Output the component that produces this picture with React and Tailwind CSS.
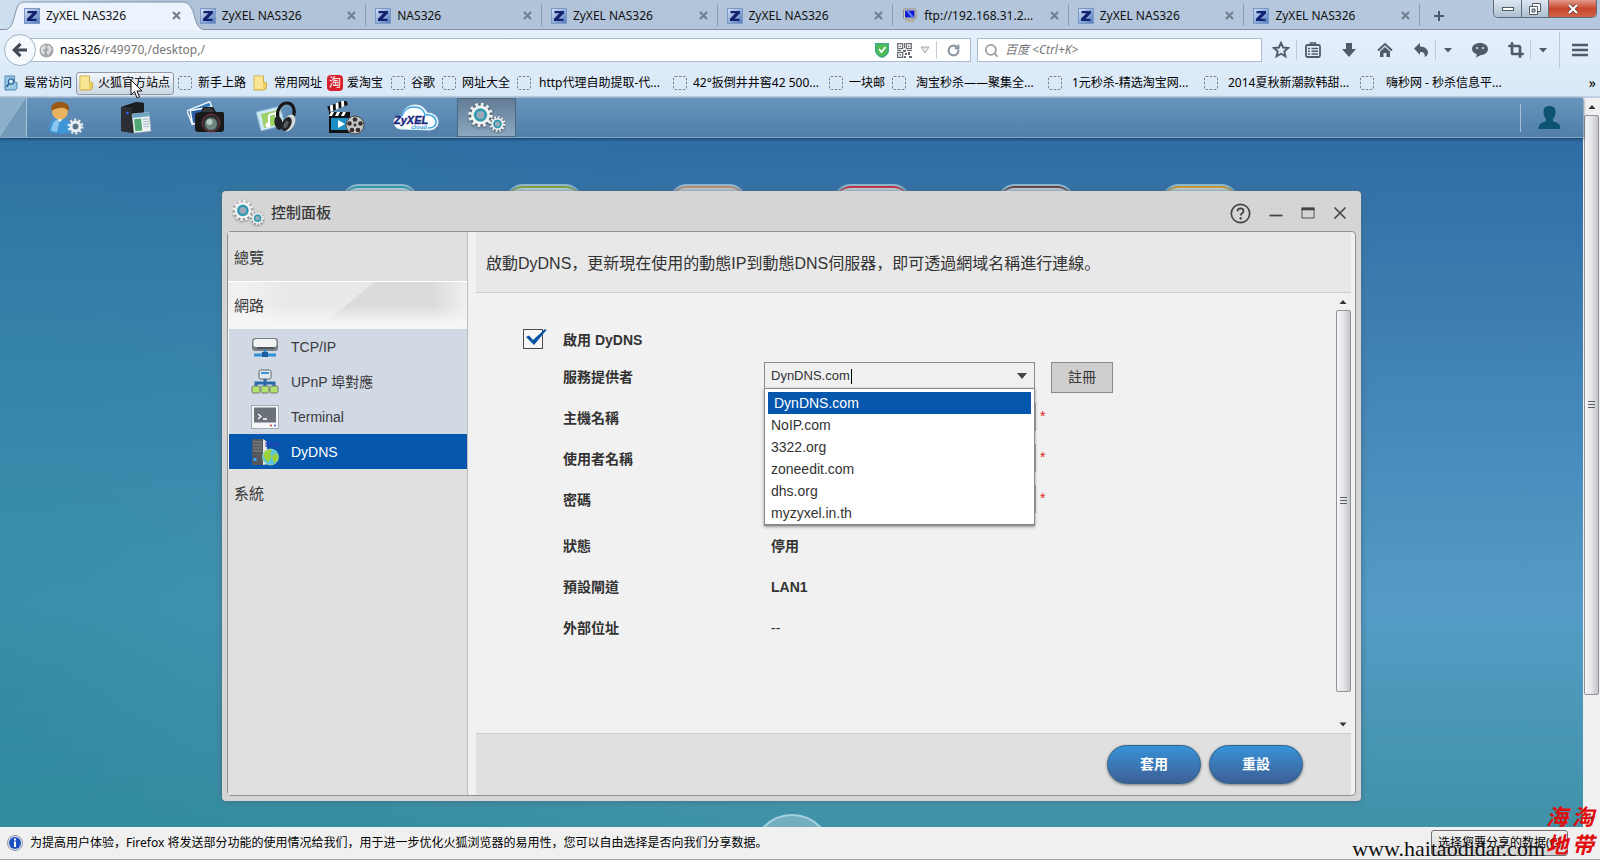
import { useState } from "react"
import { Crop, Search, RotateCw } from "lucide-react"

const UI_FONT = "font-['Noto_Sans','Noto_Sans_CJK_SC',sans-serif]"
const NAS_FONT = "font-['Liberation_Sans','Noto_Sans_CJK_TC',sans-serif]"

const tabs = [
  { title: "ZyXEL NAS326", active: true },
  { title: "ZyXEL NAS326" },
  { title: "NAS326" },
  { title: "ZyXEL NAS326" },
  { title: "ZyXEL NAS326" },
  { title: "ftp://192.168.31.2...", ftp: true },
  { title: "ZyXEL NAS326" },
  { title: "ZyXEL NAS326" },
]

const bookmarks = [
  { title: "最常访问", icon: "recent", box: "w-[72px] gap-1.5" },
  { title: "火狐官方站点", icon: "folder", box: "w-[98px] gap-1", hover: true },
  { title: "新手上路", icon: "blank", box: "w-[75px] gap-1.5" },
  { title: "常用网址", icon: "folder", box: "w-[74px] gap-1.5" },
  { title: "爱淘宝", icon: "taobao", box: "w-16 gap-1" },
  { title: "谷歌", icon: "blank", box: "w-[51px] gap-1.5" },
  { title: "网址大全", icon: "blank", box: "w-[75px] gap-1.5" },
  { title: "http代理自助提取-代...", icon: "blank", box: "w-[156px] gap-2" },
  { title: "42°扳倒井井窖42 500...", icon: "blank", box: "w-[156px] gap-1.5" },
  { title: "一块邮", icon: "blank", box: "w-[63px] gap-1.5" },
  { title: "淘宝秒杀——聚集全...", icon: "blank", box: "w-[156px] gap-2.5" },
  { title: "1元秒杀-精选淘宝网...", icon: "blank", box: "w-[156px] gap-2.5" },
  { title: "2014夏秋新潮款韩甜...", icon: "blank", box: "w-[156px] gap-2.5" },
  { title: "嗨秒网 - 秒杀信息平...", icon: "blank", box: "w-[156px] gap-3" },
]

const networkItems = [
  { title: "TCP/IP", icon: <TcpIcon /> },
  { title: "UPnP 埠對應", icon: <UpnpIcon /> },
  { title: "Terminal", icon: <TerminalIcon /> },
  { title: "DyDNS", icon: <DydnsIcon />, active: true },
]

const providers = ["DynDNS.com", "NoIP.com", "3322.org", "zoneedit.com", "dhs.org", "myzyxel.in.th"]

const fields = [
  { id: "host", label: "主機名稱", type: "text" },
  { id: "user", label: "使用者名稱", type: "text" },
  { id: "pass", label: "密碼", type: "password" },
]

const statusRows = [
  { label: "狀態", value: "停用" },
  { label: "預設閘道", value: "LAN1" },
  { label: "外部位址", value: "--", weight: "font-normal" },
]

const shortcuts = [
  "border-t-[#2f9fb0]",
  "border-t-[#86a83c]",
  "border-t-[#c98f6c]",
  "border-t-[#c8323c]",
  "border-t-[#6c3f3c]",
  "border-t-[#d99a2e]",
]

function ZIcon() {
  return (
    <svg width="16" height="16" viewBox="0 0 16 16" className="shrink-0">
      <defs>
        <linearGradient id="zbg" x1="0" y1="0" x2="1" y2="1">
          <stop offset="0" stopColor="#d4e2f5" />
          <stop offset="1" stopColor="#4f78bd" />
        </linearGradient>
      </defs>
      <rect x="0.5" y="0.5" width="15" height="15" fill="url(#zbg)" stroke="#7b98c6" />
      <path d="M3.500 3h9.500v2.300l-5.500 5.400h5v2.300h-9.500v-2.300l5.500-5.400h-5z" fill="#12246f" />
    </svg>
  )
}

function FtpIcon() {
  return (
    <svg width="16" height="16" viewBox="0 0 16 16" className="shrink-0">
      <rect x="1.500" y="1" width="12.500" height="10" rx="1" fill="#d5d2c5" stroke="#8f8d84" />
      <rect x="3" y="2.500" width="9.500" height="7" fill="#0a1bd0" />
      <path d="M4 3h3l5 6H9z" fill="#5d78ff" />
      <path d="M5.500 11.500h5l2.500 3h-10z" fill="#b5b2a6" />
    </svg>
  )
}

function CloseIcon() {
  return (
    <svg width="9" height="9" viewBox="0 0 9 9">
      <path d="M1 1l7 7M8 1l-7 7" stroke="#737f8c" strokeWidth="2.200" />
    </svg>
  )
}

function BookmarkIcon({ type }) {
  if (type === "folder") {
    return (
      <svg width="15" height="16" viewBox="0 0 15 16" className="shrink-0">
        <path d="M1 1h9.500V7l3 .8V13.500L11 15H1z" fill="#efcf63" stroke="#cfae4d" />
        <path d="M1.500 1.500h8.500v12.500H1.500z" fill="#f8e694" />
      </svg>
    )
  }
  if (type === "recent") {
    return (
      <svg width="14" height="16" viewBox="0 0 14 16" className="shrink-0">
        <path d="M1 1h9.500V7l2.500.8V13.500L11 15H1z" fill="#9cc9e6" stroke="#4a87b4" />
        <circle cx="7" cy="6.500" r="2.600" fill="#d8edfa" stroke="#2a6595" strokeWidth="1.300" />
        <path d="M5.200 8.500l-3 3.500" stroke="#2a6595" strokeWidth="1.700" />
      </svg>
    )
  }
  if (type === "taobao") {
    return (
      <span className="flex h-4 w-4 shrink-0 items-center justify-center rounded-sm bg-[#d8202c] text-[12px] leading-none text-white">
        淘
      </span>
    )
  }
  return (
    <svg width="14" height="14" viewBox="0 0 14 14" className="shrink-0">
      <rect x="0.500" y="0.500" width="13" height="13" rx="1.500" fill="none" stroke="#7b848e" strokeDasharray="2.500 1.500" />
    </svg>
  )
}

function Gear({ cx, cy, r }) {
  const step = (r * 2 * Math.PI) / 24
  return (
    <g>
      <circle cx={cx} cy={cy} r={r} fill="none" stroke="#eceeee" strokeWidth={r * 0.34} strokeDasharray={`${step} ${step}`} />
      <circle cx={cx} cy={cy} r={r * 0.9} fill="#f3f4f4" />
      <circle cx={cx} cy={cy} r={r * 0.68} fill="#cfd5d8" />
      <circle cx={cx} cy={cy} r={r * 0.5} fill="#9aa9b5" stroke="#2a9ab3" strokeWidth={r * 0.24} />
    </g>
  )
}

function GearsIcon({ className }) {
  return (
    <svg viewBox="0 0 38 32" className={className}>
      <g style={{ filter: "drop-shadow(0 1px 1px rgba(0,0,0,.5))" }}>
        <Gear cx={12.500} cy={13} r={10.500} />
        <Gear cx={29.500} cy={22} r={6.800} />
      </g>
    </svg>
  )
}

function UserGearIcon() {
  return (
    <svg width="36" height="34" viewBox="0 0 36 34">
      <path d="M1 31c0-10 4-15 11-15s11 5 11 15c-6 2-16 2-22 0z" fill="#3f96d6" />
      <path d="M3 30c1-8 4-12 9-12l-3 13z" fill="#8ac6f0" />
      <path d="M8 16l4 5 4-5z" fill="#fff" />
      <circle cx="12" cy="10.500" r="8" fill="#e9b25f" />
      <path d="M3.500 10C2 3 7 1 12 1s10.500 2 8.700 9C18 8 17 6 12 7S6 8 3.500 10z" fill="#9a5914" />
      <circle cx="27.500" cy="25.500" r="6.500" fill="none" stroke="#e6e9ec" strokeWidth="3" strokeDasharray="2 2.080" />
      <circle cx="27.500" cy="25.500" r="4.500" fill="none" stroke="#eceff2" strokeWidth="3" />
      <circle cx="27.500" cy="25.500" r="2.500" fill="#5b7284" />
    </svg>
  )
}

function StorageIcon() {
  return (
    <svg width="34" height="34" viewBox="0 0 34 34">
      <path d="M2 6l15-5 8 1v28l-9 2L2 30z" fill="#15181b" />
      <path d="M2 6l11 0v26L2 30z" fill="#2b2f34" />
      <path d="M17 1l8 1v28l-9 2-3-1V6z" fill="#1d2023" />
      <circle cx="8.500" cy="12" r="1.300" fill="#3b63ff" />
      <g transform="rotate(-6 23 22)">
        <rect x="14" y="12" width="17" height="19" fill="#eef2f2" stroke="#b9c2c6" strokeWidth="0.500" />
        <rect x="14" y="12" width="17" height="4" fill="#6aa5c4" />
        <rect x="15.500" y="17.500" width="7" height="12" fill="#4fa873" />
        <path d="M24 18.500h6M24 21h6M24 23.500h6M24 26h6" stroke="#9db9cc" />
      </g>
    </svg>
  )
}

function PhotoIcon() {
  return (
    <svg width="38" height="34" viewBox="0 0 38 34">
      <g transform="rotate(-22 14 12)">
        <rect x="1" y="4" width="26" height="16" fill="#e8f2fa" />
        <rect x="2.500" y="5.500" width="23" height="13" fill="#3376bd" />
      </g>
      <g transform="rotate(-10 14 12)">
        <rect x="3" y="7" width="22" height="15" fill="#fff" />
        <rect x="4.500" y="8.500" width="19" height="12" fill="#2a5fa6" />
      </g>
      <path d="M9 12l5-1 2-5h10l3 5h6c2 0 2 1 2 3v14c0 2-1 3-3 3H11c-2 0-3-1-3-3V14z" fill="#17191b" />
      <path d="M17 7h8l2 4H15z" fill="#34383c" />
      <circle cx="24" cy="22" r="9" fill="#2c2e31" stroke="#843237" />
      <circle cx="24" cy="23" r="6.500" fill="#6f857d" stroke="#3a3d40" />
      <circle cx="22.500" cy="21" r="3" fill="#b4cdc2" />
    </svg>
  )
}

function MusicIcon() {
  return (
    <svg width="42" height="34" viewBox="0 0 42 34">
      <path d="M1 11l24-6 5 19-24 6z" fill="#cfe8f5" stroke="#7eb0cf" />
      <path d="M6 13l17-4 3 14-17 4z" fill="#9ed16a" />
      <path d="M14 14l7-2v9M14 14v10" stroke="#fff" strokeWidth="2" fill="none" />
      <circle cx="13" cy="24" r="2.500" fill="#fff" />
      <path d="M23 18C21 9 26 2 32 2s9 7 6 15" fill="none" stroke="#141618" strokeWidth="3.200" />
      <path d="M25 18C23 11 27 5 31 4.500" fill="none" stroke="#9aa1a6" />
      <ellipse cx="23.500" cy="22" rx="4" ry="7" transform="rotate(-12 23.500 22)" fill="#202325" />
      <ellipse cx="34" cy="22" rx="5.500" ry="9" transform="rotate(28 34 22)" fill="#d3d8da" />
      <ellipse cx="31.500" cy="23" rx="4.500" ry="7.500" transform="rotate(28 31.500 23)" fill="#202325" />
      <ellipse cx="31" cy="23.500" rx="2" ry="4" transform="rotate(28 31 23.500)" fill="#555c60" />
    </svg>
  )
}

function VideoIcon() {
  return (
    <svg width="38" height="34" viewBox="0 0 38 34">
      <g transform="rotate(-22 3 10)">
        <rect x="2" y="5" width="20" height="6" fill="#111" />
        <path d="M5 5h3l-2 6H3zM11 5h3l-2 6H9zM17 5h3l-2 6h-3z" fill="#fff" />
      </g>
      <rect x="2" y="11" width="21" height="21" fill="#101316" />
      <path d="M4 11h3l-2 4H2zM10 11h3l-2 4H8zM16 11h3l-2 4h-3z" fill="#fff" />
      <rect x="4" y="17" width="17" height="12" fill="#1d8fc4" />
      <path d="M11 19l7 4-7 4z" fill="#fff" />
      <circle cx="28" cy="24" r="9" fill="#c2c6c6" stroke="#4a4c4c" />
      {[[28, 18.500], [33.500, 22.500], [31, 29], [25, 29], [22.500, 22.500]].map(([x, y]) => (
        <circle key={x} cx={x} cy={y} r="2.300" fill="#3d2f2d" />
      ))}
      <circle cx="28" cy="24" r="1.500" fill="#333" />
    </svg>
  )
}

function CloudIcon() {
  return (
    <svg width="46" height="28" viewBox="0 0 46 28">
      <path d="M8 25c-5 0-7-4-7-7 0-4 4-6 8-6 1-7 7-11 13-11 6 0 10 3 12 8 6 0 11 3 11 9 0 5-4 8-9 8z" fill="#fff" stroke="#dceefb" />
      <path d="M9 12c2-6 6-9 12-9s10 3 11 8c6-1 11 2 11 7 0 4-3 6-8 6" fill="none" stroke="#3fa3de" strokeWidth="1.500" />
      <text x="1" y="20" fontFamily="Liberation Sans, sans-serif" fontSize="11" fontWeight="700" fontStyle="italic" fill="#1b2a80" stroke="#1b2a80" strokeWidth="0.400">ZyXEL</text>
      <text x="18" y="25" fontFamily="Liberation Sans, sans-serif" fontSize="6" fontWeight="700" fill="#2f9bdd">cloud</text>
    </svg>
  )
}

function TcpIcon() {
  return (
    <svg width="28" height="24" viewBox="0 0 28 24">
      <rect x="1" y="3" width="26" height="13" rx="3.500" fill="#787e83" />
      <rect x="2.500" y="4" width="23" height="8" rx="2.500" fill="#f2f4f4" />
      <rect x="6" y="12" width="17" height="2" fill="#4d5357" />
      <path d="M14 15v5M3 20h22" stroke="#2f8fd8" strokeWidth="3" />
      <rect x="11" y="17" width="6" height="5" fill="#1f5f9c" />
    </svg>
  )
}

function UpnpIcon() {
  return (
    <svg width="28" height="26" viewBox="0 0 28 26">
      <rect x="8" y="1" width="12" height="9" rx="1.500" fill="#e3e8ea" stroke="#5e666b" />
      <rect x="10" y="3" width="8" height="2" fill="#3a92da" />
      <path d="M14 10v7M5 17v-3h18v3" stroke="#2b6ba8" strokeWidth="3" fill="none" />
      <rect x="1" y="17" width="8" height="7" rx="1.500" fill="#b3e26c" stroke="#6e7777" />
      <rect x="10" y="17" width="8" height="7" rx="1.500" fill="#b3e26c" stroke="#6e7777" />
      <rect x="19" y="17" width="8" height="7" rx="1.500" fill="#b3e26c" stroke="#6e7777" />
    </svg>
  )
}

function TerminalIcon() {
  return (
    <svg width="28" height="24" viewBox="0 0 28 24">
      <rect x="0.500" y="0.500" width="27" height="23" fill="#f4f6f8" stroke="#a3abb5" />
      <rect x="3" y="2.500" width="22" height="15" fill="#6a7179" />
      <path d="M7 9l3 2.500L7 14M12 14h4" stroke="#fff" strokeWidth="1.300" fill="none" />
      <circle cx="20" cy="20.500" r="1" fill="#cf3434" />
      <circle cx="24" cy="20.500" r="1" fill="#2f5fcc" />
    </svg>
  )
}

function DydnsIcon() {
  return (
    <svg width="28" height="28" viewBox="0 0 28 28">
      <path d="M1 1h11l4 3v22l-4 1H1z" fill="#8d9194" />
      <path d="M12 1l4 3v22l-4 1z" fill="#e4e6e7" />
      <rect x="1" y="1" width="11" height="26" fill="#55595c" />
      <path d="M2 4h9M2 7h9M2 10h9M2 13h9" stroke="#85898c" />
      <rect x="2.500" y="20" width="3" height="3" fill="#38a8ff" />
      <text x="14" y="9" fontFamily="Liberation Sans, sans-serif" fontSize="7" fontWeight="700" fill="#2c3fb2">DNS</text>
      <circle cx="19.500" cy="19" r="8" fill="#58c3ea" />
      <path d="M13 15c2-4 6-4 8-3l-2 4 2 2-3 6c-3 0-6-5-5-9zM23 15l4 2c1 4-1 7-4 8l-2-5z" fill="#9bd038" />
      <circle cx="19.500" cy="19" r="8" fill="none" stroke="#bfe79a" strokeWidth="0.700" />
    </svg>
  )
}

function Divider() {
  return <span className="h-9 w-px shrink-0 bg-[#bcc8d4]" />
}

function TabStrip() {
  return (
    <div className="relative flex h-[30px] items-stretch border-b border-[#8193a8] bg-linear-to-r from-[#cfe0f1] via-[#b0c2d7] via-10% to-[#b5c8de] pl-[15px]">
      <div className="flex min-w-0 flex-1">
        {tabs.map((tab, index) => (
          <div key={index} className="relative flex min-w-0 flex-1 items-center pt-0.5 pr-2.5 pl-[9px]">
            {tab.active && (
              <svg viewBox="0 0 201 30" preserveAspectRatio="none" className="absolute top-0 -left-[11px] h-[30px] w-[201px]">
                <path
                  d="M0 30C9 29 9 20 12 11C14 3 17 2 22 2H177C184 2 186 5 189 11C192 22 193 29 201 30"
                  fill="#ecf3fc"
                  stroke="#8193a8"
                />
              </svg>
            )}
            <button className="relative flex min-w-0 flex-1 items-center gap-1.5 text-[12px] text-[#111]">
              {tab.ftp ? <FtpIcon /> : <ZIcon />}
              <span className="truncate">{tab.title}</span>
            </button>
            <button aria-label="关闭标签页" className="relative shrink-0">
              <CloseIcon />
            </button>
            {index > 0 && <span className="absolute top-1 right-0 h-[22px] w-px bg-[#8b9cb0]" />}
          </div>
        ))}
      </div>
      <div className="flex w-[180px] shrink-0 items-center pt-0.5 pl-[13px]">
        <button aria-label="新标签页">
          <svg width="12" height="12" viewBox="0 0 12 12">
            <path d="M6 1v10M1 6h10" stroke="#4c5865" strokeWidth="2" />
          </svg>
        </button>
      </div>
      <div className="absolute top-0 right-[3px] flex h-[18px] overflow-hidden rounded-b-[5px] border border-t-0 border-[#5f6b78]">
        <button aria-label="最小化" className="flex w-7 items-center justify-center border-r border-[#5f6b78] bg-linear-to-b from-[#dde7f1] to-[#aebfd1]">
          <span className="h-1 w-3 border border-[#515962] bg-white" />
        </button>
        <button aria-label="还原" className="flex w-[27px] items-center justify-center border-r border-[#5f6b78] bg-linear-to-b from-[#dde7f1] to-[#aebfd1]">
          <svg width="12" height="12" viewBox="0 0 12 12">
            <path d="M3.500.5h8v8h-8z" fill="#fff" stroke="#515962" />
            <path d="M.5 3.500h8v8h-8z" fill="#fff" stroke="#515962" />
            <path d="M3 6h3v3H3z" fill="#aebfd1" stroke="#515962" />
          </svg>
        </button>
        <button aria-label="关闭" className="flex w-[47px] items-center justify-center bg-linear-to-b from-[#e29a88] via-[#c9452c] to-[#d0614a]">
          <svg width="12" height="10" viewBox="0 0 12 10">
            <path d="M2 1l8 8M10 1L2 9" stroke="#5b2f2a" strokeWidth="3.600" />
            <path d="M2 1l8 8M10 1L2 9" stroke="#fff" strokeWidth="2.400" />
          </svg>
        </button>
      </div>
    </div>
  )
}

function NavBar() {
  return (
    <div className="flex h-10 items-center pl-1">
      <button aria-label="后退" className="relative z-10 flex h-8 w-8 shrink-0 items-center justify-center rounded-full border border-[#a0b1c4] bg-[#f6fafe]">
        <svg width="16" height="16" viewBox="0 0 16 16">
          <path d="M15 8H3M8.500 1.800L2.300 8l6.200 6.200" stroke="#404b57" strokeWidth="3.200" fill="none" />
        </svg>
      </button>
      <div className="-ml-1.5 flex h-6 min-w-0 flex-1 items-center border border-[#a9bbcd] bg-white pr-2.5 pl-2">
        <svg width="15" height="15" viewBox="0 0 15 15" className="shrink-0">
          <circle cx="7.500" cy="7.500" r="7" fill="#a3a7ab" />
          <path d="M2 5l3-3 2 1-1 3-2 1 2 2-1 3-3-3zM9 2l3 2 1 3-2 2-1 3-2-1V8l2-1-2-2z" fill="#dcdee0" />
        </svg>
        <p className="ml-1.5 flex-1 text-[12px] text-black">
          nas326<span className="text-[#777]">/r49970,/desktop,/</span>
        </p>
        <svg width="14" height="16" viewBox="0 0 14 16">
          <path d="M0 1h14v8c0 3-4 6-7 7-3-1-7-4-7-7z" fill="#3fa98c" />
          <path d="M1.500 2.500h11V9c0 2-3 4.500-5.500 5.500C4.500 13.500 1.500 11 1.500 9z" fill="#4ebd52" />
          <path d="M4 7l2.500 3L10.500 5" stroke="#fff" strokeWidth="1.800" fill="none" />
        </svg>
        <svg width="15" height="15" viewBox="0 0 15 15" className="ml-2">
          <path
            d="M.7.700h5v5h-5zM9.300.7h5v5h-5zM.7 9.300h5v5h-5z"
            fill="none"
            stroke="#6c7076"
            strokeWidth="1.300"
          />
          <path d="M2.500 2.500h1.500v1.500H2.500zM11 2.500h1.500v1.500H11zM2.500 11h1.500v1.500H2.500zM7 0h1v5H7zM0 7h4v1H0zM6 7h3v2H6zM10 7h5v1h-5zM8 10h2v2H8zM11 9h2v3h-2zM7 13h2v2H7zM12 13h3v2h-3z" fill="#6c7076" />
        </svg>
        <svg width="10" height="8" viewBox="0 0 10 8" className="ml-2">
          <path d="M1 1h8L5 7z" fill="#e3e5e8" stroke="#a5abb2" />
        </svg>
        <span className="mr-2.5 ml-1.5 h-[18px] w-px bg-[#c5ced8]" />
        <button aria-label="刷新">
          <RotateCw size={13} strokeWidth={4} color="#8c98a6" />
        </button>
      </div>
      <label className="ml-1.5 flex h-6 w-[285px] shrink-0 items-center gap-1.5 border border-[#a9bbcd] bg-white pl-1.5">
        <Search size={15} strokeWidth={3} color="#9b9fa4" />
        <input aria-label="搜索" placeholder="百度 <Ctrl+K>" className="min-w-0 flex-1 text-[12px] italic outline-none placeholder:text-[#777]" />
      </label>
      <div className="ml-2.5 flex shrink-0 items-center text-[#4f5b67]">
        <button aria-label="收藏">
          <svg width="18" height="18" viewBox="0 0 18 18">
            <path d="M9 1.800l2.100 4.700 5.100.5-3.900 3.400 1.200 5L9 12.800l-4.500 2.600 1.200-5L1.800 7l5.100-.5z" fill="none" stroke="currentColor" strokeWidth="1.900" />
          </svg>
        </button>
        <span className="ml-1.5 h-5 w-px bg-[#bcc8d4]" />
        <button aria-label="书签" className="ml-2">
          <svg width="16" height="16" viewBox="0 0 16 16">
            <path d="M5.500 2.500V1h5v1.500" stroke="currentColor" strokeWidth="1.500" fill="none" />
            <rect x="1" y="3" width="14" height="12" rx="1.500" fill="none" stroke="currentColor" strokeWidth="1.800" />
            <path d="M3 6.500h2M6.500 6.500H13M3 9.200h2M6.500 9.200H13M3 12h2M6.500 12H13" stroke="currentColor" strokeWidth="1.500" />
          </svg>
        </button>
        <button aria-label="下载" className="ml-5">
          <svg width="16" height="16" viewBox="0 0 16 16">
            <path d="M5 1h6v6h4l-7 8-7-8h4z" fill="currentColor" />
          </svg>
        </button>
        <button aria-label="主页" className="ml-5">
          <svg width="16" height="16" viewBox="0 0 16 16">
            <path d="M1 8.500L8 2l7 6.500" fill="none" stroke="currentColor" strokeWidth="2" />
            <path d="M3 9.500l5-4.500 5 4.500V15H9.500v-4h-3v4H3z" fill="currentColor" />
          </svg>
        </button>
        <button aria-label="撤销" className="ml-5">
          <svg width="16" height="16" viewBox="0 0 16 16">
            <path d="M1 6.500L7 1v3.500c5 0 8 3 8 6 0 2-1 3.500-3.500 4.500 1-3-.5-5-4.500-5v3z" fill="currentColor" />
          </svg>
        </button>
        <span className="ml-1.5 h-5 w-px bg-[#bcc8d4]" />
        <svg width="8" height="5" viewBox="0 0 8 5" className="ml-2"><path d="M0 0h8L4 4.500z" fill="currentColor" /></svg>
        <button aria-label="聊天" className="ml-5">
          <svg width="16" height="16" viewBox="0 0 16 16">
            <path d="M8 1c4.500 0 8 2.500 8 6s-3.500 6-7 6l-5 2.500.8-3.300C2 11.200 0 9.500 0 7c0-3.500 3.500-6 8-6z" fill="currentColor" />
            <circle cx="5" cy="6" r="1" fill="#dfe9f5" />
            <circle cx="11" cy="6" r="1" fill="#dfe9f5" />
          </svg>
        </button>
        <button aria-label="截图" className="ml-5">
          <Crop size={16} strokeWidth={4} />
        </button>
        <span className="ml-1.5 h-5 w-px bg-[#bcc8d4]" />
        <svg width="8" height="5" viewBox="0 0 8 5" className="mr-3 ml-2"><path d="M0 0h8L4 4.500z" fill="currentColor" /></svg>
        <Divider />
        <button aria-label="菜单" className="mr-3 ml-3">
          <svg width="16" height="14" viewBox="0 0 16 14">
            <path d="M0 2h16M0 7h16M0 12h16" stroke="currentColor" strokeWidth="2.600" />
          </svg>
        </button>
      </div>
    </div>
  )
}

function BookmarksBar() {
  return (
    <div className="flex h-[26px] items-center pl-1 text-[12px] text-black">
      {bookmarks.map((item) => (
        <a
          key={item.title}
          href="#"
          className={`flex shrink-0 items-center whitespace-nowrap ${item.box} ${
            item.hover ? "mr-1 h-[23px] rounded-[3px] border border-[#8f9aa6] bg-linear-to-b from-[#f2f6fb] to-[#ccd6e1] pl-0.5" : ""
          }`}
        >
          <BookmarkIcon type={item.icon} />
          {item.title}
        </a>
      ))}
      <button aria-label="更多书签" className="mr-1 ml-auto text-[14px] leading-4">»</button>
    </div>
  )
}

function Scrollbar({ width, thumb }) {
  return (
    <div className={`flex shrink-0 flex-col items-center bg-[#f0f0f0] ${width}`}>
      <svg width="16" height="17" viewBox="0 0 16 17"><path d="M4.500 11h7L8 7z" fill="#333" /></svg>
      <div className={`flex min-h-0 w-[15px] items-center justify-center rounded-[2px] border border-[#8f9296] bg-linear-to-r from-[#f7f7f7] via-[#e4e5e8] to-[#c3c5ca] ${thumb}`}>
        <svg width="7" height="8" viewBox="0 0 7 8"><path d="M0 .5h7M0 3.500h7M0 6.500h7" stroke="#5a5d62" /></svg>
      </div>
      <div className="flex-1" />
      <svg width="16" height="17" viewBox="0 0 16 17"><path d="M4.500 6.500h7L8 10.500z" fill="#333" /></svg>
    </div>
  )
}

function AppBar() {
  const apps = [
    { name: "使用者", icon: <UserGearIcon /> },
    { name: "檔案", icon: <StorageIcon /> },
    { name: "相片", icon: <PhotoIcon /> },
    { name: "音樂", icon: <MusicIcon /> },
    { name: "影片", icon: <VideoIcon /> },
    { name: "雲端", icon: <CloudIcon /> },
  ]

  return (
    <div className="relative z-10 flex h-10 items-stretch border-b border-[#7fa5c5] bg-linear-to-b from-[#6794bd] to-[#527fa9] shadow-[0_1px_3px_#143a5e]">
      <button aria-label="顯示桌面" className="w-[27px] border-r border-[#a9c4d8] bg-linear-to-br from-[#8cb0cb] from-50% to-[#7199b8] to-50%" />
      <div className="ml-1 flex">
        {apps.map((app) => (
          <button key={app.name} aria-label={app.name} className="flex w-[70px] items-center justify-center">
            {app.icon}
          </button>
        ))}
      </div>
      <button aria-label="控制面板" className="ml-1.5 flex w-[59px] items-center justify-center border border-[#4a6984] bg-linear-to-b from-[#637d97] to-[#8ba8c1]">
        <GearsIcon className="h-8 w-[38px]" />
      </button>
      <div className="ml-auto flex items-center">
        <span className="h-7 w-px bg-[#a7c0da]" />
        <button aria-label="帳號" className="mr-[22px] ml-[17px]">
          <svg width="23" height="25" viewBox="0 0 23 25">
            <path d="M5.500 7c0-4 2-6 6-6s6 2 6 6c0 3-1 5-2.500 7v2c4 2 7.500 2 7.500 8h-22c0-6 3.500-6 7.500-8v-2C6.500 12 5.500 10 5.500 7z" fill="#0c5371" />
          </svg>
        </button>
      </div>
    </div>
  )
}

function Sidebar() {
  return (
    <nav className="w-[240px] shrink-0 border-r border-[#bdbdbd] bg-[#e0e0e0] text-[15px] text-[#3a3a3a]">
      <a href="#" className="flex h-[49px] items-center pt-1 pl-1.5">總覽</a>
      <a href="#" className="relative flex h-12 items-center border-t border-white bg-[#f0f0f0] pt-0.5 pl-1.5">
        <svg viewBox="0 0 240 47" preserveAspectRatio="none" className="absolute inset-0 h-full w-full">
          <defs>
            <linearGradient id="sheen" x1="0" x2="1">
              <stop offset="0" stopColor="#d6d6d6" stopOpacity="0" />
              <stop offset="0.200" stopColor="#d6d6d6" />
              <stop offset="0.850" stopColor="#d6d6d6" />
              <stop offset="1" stopColor="#d6d6d6" stopOpacity="0" />
            </linearGradient>
            <linearGradient id="lower" x1="0" x2="0" y1="0" y2="1">
              <stop offset="0.500" stopColor="#f6f6f6" stopOpacity="0" />
              <stop offset="0.900" stopColor="#f6f6f6" />
            </linearGradient>
          </defs>
          <rect x="15" width="225" height="47" fill="url(#sheen)" opacity="0.800" />
          <path d="M0 0H147L98 40H0z" fill="#f2f2f2" opacity="0.600" />
          <rect width="240" height="47" fill="url(#lower)" />
        </svg>
        <span className="relative">網路</span>
      </a>
      <ul className="border-l border-white bg-[#d1d9e5] text-[14px]">
        {networkItems.map((item) => (
          <li key={item.title}>
            <a
              href="#"
              className={`flex h-[35px] items-center gap-3 pl-[22px] ${item.active ? "bg-[#0556ad] text-white" : ""}`}
            >
              {item.icon}
              <span className="pt-0.5">{item.title}</span>
            </a>
          </li>
        ))}
      </ul>
      <a href="#" className="flex h-[49px] items-center pt-0.5 pl-1.5">系統</a>
    </nav>
  )
}

function ProviderSelect() {
  const [provider, setProvider] = useState("DynDNS.com")

  return (
    <div className="relative mb-[5px] h-[27px] w-[271px] border border-[#8b8b8b] bg-[#f0f0f0] font-normal">
      <input
        id="provider"
        role="combobox"
        aria-expanded="true"
        aria-controls="provider-list"
        value={provider}
        onChange={(e) => setProvider(e.target.value)}
        className="h-full w-full pl-1.5 text-[13px] text-[#333] outline-none"
      />
      <span className="absolute top-[6px] left-[86px] h-[15px] w-px bg-black" />
      <svg width="10" height="6" viewBox="0 0 10 6" className="absolute top-[10px] right-[7px]">
        <path d="M0 0h10L5 6z" fill="#444" />
      </svg>
      <ul
        id="provider-list"
        role="listbox"
        className="absolute top-[25px] -right-px -left-px z-10 border border-b-2 border-[#8b8b8b] bg-white px-[3px] pt-[3px] text-[14px] text-[#333] shadow-[0_1px_3px_#999]"
      >
        {providers.map((name, index) => (
          <li
            key={name}
            role="option"
            aria-selected={index === 0}
            onClick={() => setProvider(name)}
            className={`flex h-[22px] items-center pt-0.5 ${index === 0 ? "bg-[#0556ad] pl-1.5 text-white" : "pl-[3px]"}`}
          >
            {name}
          </li>
        ))}
      </ul>
    </div>
  )
}

function DydnsForm() {
  return (
    <form className="min-w-0 flex-1 pt-[27px] pl-[47px] text-[14px] font-bold text-[#333]">
      <div className="flex h-[37px] items-center">
        <span className="relative h-5 w-[40px]">
          <input id="enable" type="checkbox" defaultChecked className="h-5 w-5 appearance-none border border-[#4a4a4a] bg-[#f6f6f6]" />
          <svg width="22" height="18" viewBox="0 0 22 18" className="pointer-events-none absolute top-0 left-0.5">
            <path d="M1 8l3-1.500 4 4.500L20 0l1.500 1L9 16z" fill="#0a52a6" />
          </svg>
        </span>
        <label htmlFor="enable" className="pt-1">啟用 DyDNS</label>
      </div>
      <div className="flex h-[41px] items-center pl-[40px]">
        <label htmlFor="provider" className="w-[201px]">服務提供者</label>
        <ProviderSelect />
        <button type="button" className="ml-4 h-[31px] w-[62px] border border-[#8b8b8b] bg-[#cfcfcf] font-normal">註冊</button>
      </div>
      {fields.map((field) => (
        <div key={field.id} className="flex h-[41px] items-center pl-[40px]">
          <label htmlFor={field.id} className="w-[201px]">{field.label}</label>
          <input id={field.id} type={field.type} className="mb-1 h-7 w-[272px] border border-[#8b8b8b] px-1.5" />
          <span className="mb-1 ml-1 font-normal text-[#e02020]">*</span>
        </div>
      ))}
      <dl className="mt-[5px]">
        {statusRows.map((row) => (
          <div key={row.label} className="flex h-[41px] items-center pl-[40px]">
            <dt className="w-[208px]">{row.label}</dt>
            <dd className={row.weight}>{row.value}</dd>
          </div>
        ))}
      </dl>
    </form>
  )
}

function ControlPanel() {
  const pill =
    "h-[39px] w-[94px] rounded-full border border-[#2d6187] bg-linear-to-b from-[#3493d8] to-[#3c5f96] text-[14px] font-bold text-white shadow-[0_1px_3px_#777]"

  return (
    <section className="relative flex flex-1 flex-col rounded-[4px] bg-[#d5d5d5] px-[5px] pb-[5px] shadow-[0_0_6px_#4a6a80]">
      <header className="flex h-10 items-center pt-1 pr-[9px] pl-[5px] text-[#3a3a3a]">
        <GearsIcon className="h-7 w-[33px]" />
        <h1 className="ml-1.5 flex-1 text-[15px] font-medium">控制面板</h1>
        <div className="flex items-center gap-[18px]">
          <button aria-label="說明">
            <svg width="21" height="21" viewBox="0 0 21 21">
              <circle cx="10.500" cy="10.500" r="9.200" fill="none" stroke="#444" strokeWidth="1.700" />
              <path d="M7.500 8.300c0-2 1.300-3 3-3s3 1 3 2.700c0 2.200-2.800 2.400-2.800 4.600" fill="none" stroke="#444" strokeWidth="1.800" />
              <circle cx="10.700" cy="15.300" r="1.200" fill="#444" />
            </svg>
          </button>
          <button aria-label="最小化">
            <svg width="14" height="14" viewBox="0 0 14 14"><path d="M.5 9.500h13" stroke="#444" strokeWidth="1.700" /></svg>
          </button>
          <button aria-label="最大化">
            <svg width="14" height="12" viewBox="0 0 14 12">
              <rect x="1" y="1" width="12" height="10" fill="none" stroke="#555" />
              <path d="M.5 2h13" stroke="#444" strokeWidth="2.600" />
            </svg>
          </button>
          <button aria-label="關閉">
            <svg width="14" height="14" viewBox="0 0 14 14"><path d="M1.500 1.500l11 11M12.500 1.500l-11 11" stroke="#444" strokeWidth="1.600" /></svg>
          </button>
        </div>
      </header>
      <div className="flex flex-1 rounded-[4px] border border-[#8f8f8f] bg-[#f1f1f1]">
        <Sidebar />
        <main className="mr-1 ml-2 flex min-w-0 flex-1 flex-col">
          <p className="flex h-[61px] items-center border-b border-[#cecece] bg-[#e8e8e8] pt-1 pl-2.5 font-['Liberation_Sans','Noto_Sans_CJK_SC',sans-serif] text-[16px] text-[#333]">
            啟動DyDNS，更新現在使用的動態IP到動態DNS伺服器，即可透過網域名稱進行連線。
          </p>
          <div className="flex flex-1">
            <DydnsForm />
            <Scrollbar width="w-4" thumb="flex-[16]" />
          </div>
          <footer className="flex h-[62px] items-center justify-end gap-2 border-t border-[#cecece] bg-[#e0e0e0] pr-12">
            <button className={pill}>套用</button>
            <button className={pill}>重設</button>
          </footer>
        </main>
      </div>
    </section>
  )
}

function Desktop() {
  return (
    <div className="flex min-w-0 flex-1 flex-col bg-linear-to-b from-[#2c68a2] via-[#549cc6] via-70% to-[#3f92a8]">
      <AppBar />
      <div className="relative flex flex-1 flex-col overflow-hidden bg-[radial-gradient(circle_at_0%_80%,#23849499,#23849400_50%)] pt-[53px] pr-[222px] pb-[26px] pl-[222px]">
        <div className="absolute top-12 left-[343px] flex gap-[90px]">
          {shortcuts.map((color) => (
            <span key={color} className={`h-10 w-[74px] rounded-[16px] border-t-2 bg-[#d6e6ea] shadow-[0_0_0_2px_#8fb8cf] ${color}`} />
          ))}
        </div>
        <span className="absolute top-[676px] left-1/2 h-20 w-20 -translate-x-1/2 rounded-full border-2 border-[#a5d0dc] bg-[#74afc0]" />
        <ControlPanel />
      </div>
    </div>
  )
}

function NoticeBar() {
  return (
    <div className="relative flex h-[33px] shrink-0 items-center border-b border-[#a0a0a0] bg-[#f0f0f0] pr-8 pl-[7px] text-[12px] text-black">
      <svg width="16" height="16" viewBox="0 0 16 16">
        <circle cx="8" cy="8" r="7.500" fill="#dfe5ee" stroke="#8b97aa" />
        <circle cx="8" cy="8" r="6" fill="#1d4fc0" />
        <path d="M7 6.500h2V12H7zM7 3.500h2v2H7z" fill="#fff" />
      </svg>
      <p className="ml-[7px] flex-1">
        为提高用户体验，Firefox 将发送部分功能的使用情况给我们，用于进一步优化火狐浏览器的易用性，您可以自由选择是否向我们分享数据。
      </p>
      <button className="h-[26px] w-[137px] rounded-[3px] border border-[#707070] bg-linear-to-b from-[#f2f2f2] to-[#d2d2d2] whitespace-nowrap">
        选择您要分享的数据(C)
      </button>
      <span className="absolute right-[55px] -bottom-0.5 font-['Liberation_Serif',serif] text-[22px] leading-6 text-[#111]">www.haitaodidar.com</span>
      <div className="absolute right-1.5 bottom-0.5 grid grid-cols-2 gap-x-1 font-['Noto_Sans_CJK_SC',sans-serif] text-[22px] leading-7 font-bold text-[#e00b0b] italic">
        <span>海</span>
        <span>淘</span>
        <span>地</span>
        <span>带</span>
      </div>
    </div>
  )
}

const App = () => {
  return (
    <div className={`relative flex min-h-screen flex-col overflow-hidden ${UI_FONT}`}>
      <div className="shrink-0 border-b-2 border-[#c0d0e2] bg-linear-to-b from-[#e9f2fc] to-[#d9e8f7]">
        <TabStrip />
        <NavBar />
        <BookmarksBar />
      </div>
      <div className={`flex flex-1 ${NAS_FONT}`}>
        <Desktop />
        <Scrollbar width="w-[17px]" thumb="flex-[5]" />
      </div>
      <NoticeBar />
      <svg width="13" height="20" viewBox="0 0 13 20" className="absolute top-[79px] left-[130px]">
        <path d="M1 1v15l3.500-3.500L7 19l2.500-1L7 12h5z" fill="#fff" stroke="#111" />
      </svg>
    </div>
  )
}

export default App
